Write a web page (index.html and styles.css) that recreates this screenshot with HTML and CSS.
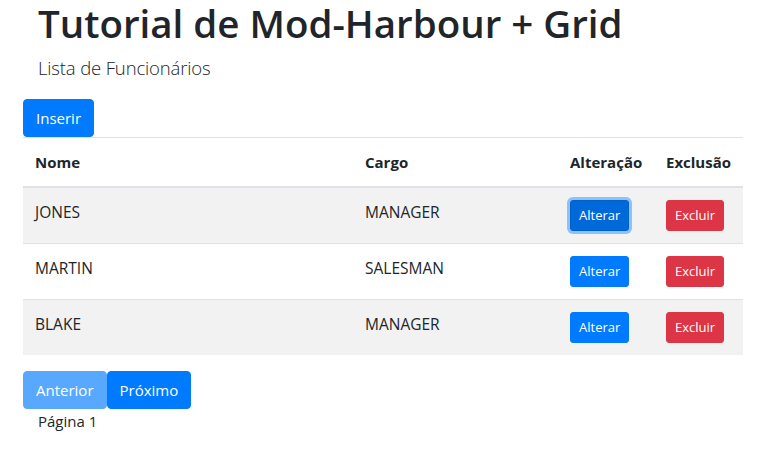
FILE: index.html
```html
<!DOCTYPE html>
<html lang="pt">
<head>
<meta charset="utf-8">
<title>Tutorial de Mod-Harbour + Grid</title>
<link rel="stylesheet" href="styles.css">
</head>
<body>
<div class="page">
  <header class="head">
    <h1 class="title">Tutorial de Mod-Harbour + Grid</h1>
    <p class="lead">Lista de Funcionários</p>
  </header>
  <button class="btn btn-primary btn-insert">Inserir</button>
  <table class="grid">
    <thead>
      <tr>
        <th class="c-nome">Nome</th>
        <th class="c-cargo">Cargo</th>
        <th class="c-alt">Alteração</th>
        <th class="c-exc">Exclusão</th>
      </tr>
    </thead>
    <tbody>
      <tr class="odd">
        <td>JONES</td>
        <td>MANAGER</td>
        <td><button class="btn btn-sm btn-primary focus">Alterar</button></td>
        <td><button class="btn btn-sm btn-danger">Excluir</button></td>
      </tr>
      <tr>
        <td>MARTIN</td>
        <td>SALESMAN</td>
        <td><button class="btn btn-sm btn-primary">Alterar</button></td>
        <td><button class="btn btn-sm btn-danger">Excluir</button></td>
      </tr>
      <tr class="odd">
        <td>BLAKE</td>
        <td>MANAGER</td>
        <td><button class="btn btn-sm btn-primary">Alterar</button></td>
        <td><button class="btn btn-sm btn-danger">Excluir</button></td>
      </tr>
    </tbody>
  </table>
  <div class="pager">
    <button class="btn btn-primary disabled">Anterior</button><button class="btn btn-primary">Próximo</button>
  </div>
  <p class="pagina">Página 1</p>
</div>
</body>
</html>
```

FILE: styles.css
```css
* { box-sizing: border-box; }
body {
  margin: 0;
  font-family: "Open Sans", "Noto Sans", sans-serif;
  color: #212529;
  background: #fff;
  font-size: 15px;
  line-height: 24px;
}
.page {
  width: 743px;
  padding-left: 23px;
}
.head {
  padding-left: 15px;
}
.title {
  margin: 0;
  font-size: 38.5px;
  line-height: 46px;
  font-weight: 600;
}
.lead {
  margin: 7px 0 0;
  font-size: 18.5px;
  line-height: 30px;
  font-weight: 300;
  letter-spacing: -0.15px;
}
.btn {
  font-family: inherit;
  display: inline-block;
  border: 1px solid transparent;
  border-radius: 4px;
  padding: 6px 12px;
  font-size: 15px;
  line-height: 24px;
  color: #fff;
  cursor: pointer;
  vertical-align: middle;
}
.btn-primary { background: #007bff; border-color: #007bff; }
.btn-danger { background: #dc3545; border-color: #dc3545; }
.btn-sm {
  padding: 4px 8px;
  font-size: 13px;
  line-height: 21px;
  border-radius: 3px;
}
.btn.focus {
  background: #0069d9;
  border-color: #0062cc;
  box-shadow: 0 0 0 3px rgba(38, 143, 255, 0.5);
}
.btn.disabled { opacity: 0.65; }
.btn-insert { margin-top: 16px; }
.grid {
  width: 720px;
  table-layout: fixed;
  border-collapse: collapse;
  margin-bottom: 16px;
}
.grid th, .grid td {
  padding: 12px;
  text-align: left;
  vertical-align: top;
  border-top: 1px solid #dee2e6;
  white-space: nowrap;
}
.grid th {
  font-weight: 700;
  border-bottom: 2px solid #dee2e6;
  vertical-align: bottom;
}
.grid td { font-size: 15.5px; line-height: 24px; }
.grid tbody tr.odd { background: #f2f2f2; }
.c-nome { width: 330px; }
.c-cargo { width: 205px; }
.c-alt { width: 96px; }
.c-exc { width: 89px; }
.pager { display: flex; }
.pagina {
  margin: 0;
  padding-left: 15px;
}
```
